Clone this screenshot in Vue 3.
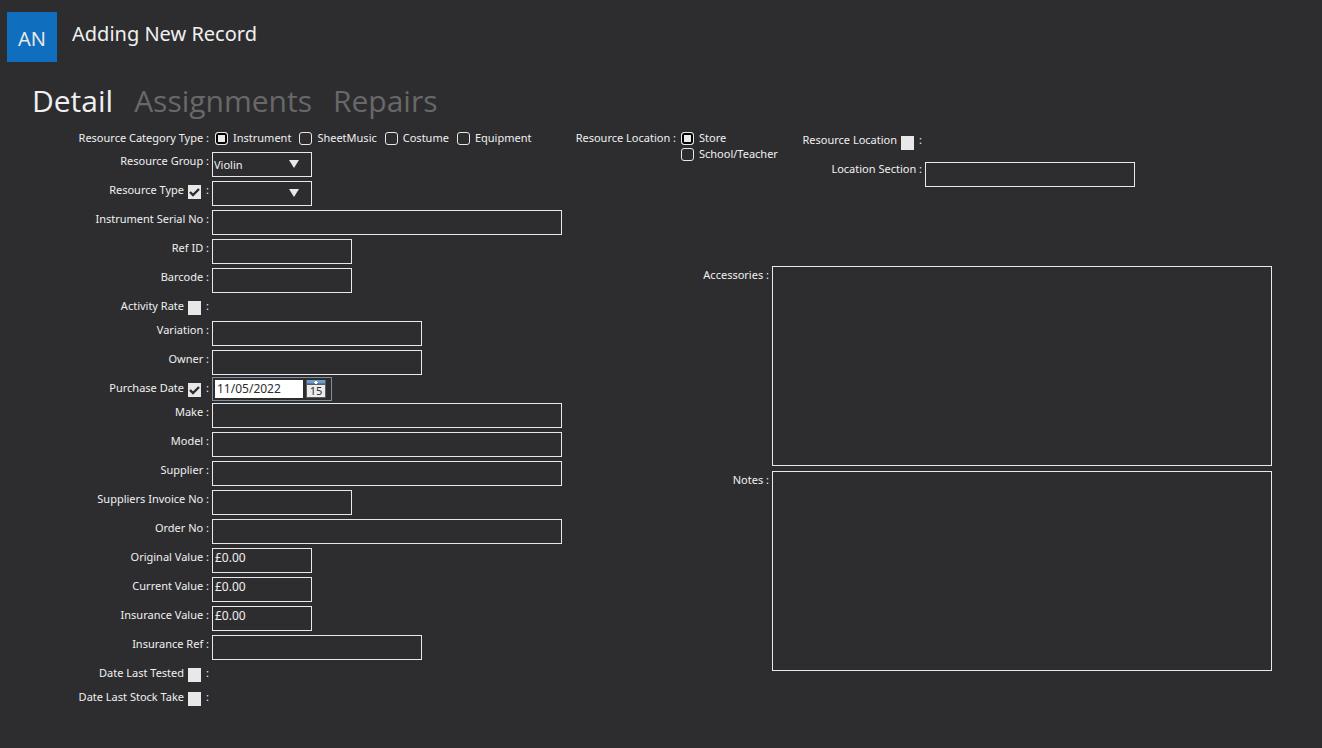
<template>
  <div class="page">
    <header class="header">
      <div class="avatar">AN</div>
      <h1 class="title">Adding New Record</h1>
    </header>

    <nav class="tabs">
      <button
        v-for="tab in tabs"
        :key="tab"
        type="button"
        class="tab"
        :class="{ active: tab === activeTab }"
        @click="activeTab = tab"
      >{{ tab }}</button>
    </nav>

    <form class="form" @submit.prevent>
      <div class="details">
        <div class="row category">
          <span id="category-label" class="caption">Resource Category Type :</span>
          <div class="radios" role="radiogroup" aria-labelledby="category-label">
            <label v-for="c in categories" :key="c" class="option">
              <input type="radio" name="category" :value="c" v-model="category" />{{ c }}
            </label>
          </div>
        </div>

        <div v-for="f in fields" :key="f.id" class="row" :class="{ short: f.type === 'none' || f.type === 'date' }">
          <div class="caption">
            <label :for="f.toggle ? f.id + '-on' : f.id">{{ f.label }}{{ f.toggle ? '' : ' :' }}</label>
            <template v-if="f.toggle">
              <input :id="f.id + '-on'" type="checkbox" v-model="f.on" />
              <span class="colon">:</span>
            </template>
          </div>
          <div v-if="f.type === 'select'" class="select small">
            <select :id="f.id" v-model="f.value" :aria-label="f.label">
              <option v-for="o in f.options" :key="o" :value="o">{{ o }}</option>
            </select>
            <svg class="arrow" viewBox="0 0 10 8"><path d="M0 0h10L5 8z" /></svg>
          </div>
          <div v-else-if="f.type === 'date'" class="date">
            <input :id="f.id" type="text" v-model="f.value" :aria-label="f.label" />
            <button type="button" class="calendar" aria-label="Open calendar">
              <svg viewBox="0 0 20 18">
                <rect width="20" height="18" fill="#5c5c5c" />
                <rect x="1" width="18" height="4" fill="#6f9cc8" />
                <rect x="1" y="3" width="18" height="1" fill="#4a7cab" />
                <path d="M9 1h2v1h1v1h-1v1H9V3H8V2h1z" fill="#fff" />
                <rect x="1" y="5" width="18" height="12" fill="#ececec" />
                <text x="10" y="15" text-anchor="middle" fill="#2d2d30">15</text>
              </svg>
            </button>
          </div>
          <input v-else-if="f.type === 'text'" :id="f.id" type="text" class="field" :class="f.size" v-model="f.value" />
        </div>
      </div>

      <div class="extra">
        <div class="location">
          <span id="location-label" class="location-label">Resource Location :</span>
          <div class="places" role="radiogroup" aria-labelledby="location-label">
            <label v-for="p in places" :key="p" class="option">
              <input type="radio" name="place" :value="p" v-model="place" />{{ p }}
            </label>
          </div>
          <div class="section">
            <div class="row">
              <div class="caption">
                <label for="resource-location">Resource Location</label>
                <input id="resource-location" type="checkbox" v-model="hasLocation" />
                <span class="colon">:</span>
              </div>
            </div>
            <div class="row">
              <label class="caption" for="location-section">Location Section :</label>
              <input id="location-section" type="text" class="field medium" v-model="locationSection" />
            </div>
          </div>
        </div>

        <div class="memo">
          <label class="caption" for="accessories">Accessories :</label>
          <textarea id="accessories" v-model="accessories"></textarea>
        </div>
        <div class="memo">
          <label class="caption" for="notes">Notes :</label>
          <textarea id="notes" v-model="notes"></textarea>
        </div>
      </div>
    </form>
  </div>
</template>

<script setup>
import { reactive, ref } from 'vue'

const tabs = ['Detail', 'Assignments', 'Repairs']
const activeTab = ref('Detail')

const categories = ['Instrument', 'SheetMusic', 'Costume', 'Equipment']
const category = ref('Instrument')

const places = ['Store', 'School/Teacher']
const place = ref('Store')

const hasLocation = ref(false)
const locationSection = ref('')
const accessories = ref('')
const notes = ref('')

const fields = reactive([
  { id: 'group', label: 'Resource Group', type: 'select', value: 'Violin', options: ['Violin'] },
  { id: 'type', label: 'Resource Type', type: 'select', value: '', options: [''], toggle: true, on: true },
  { id: 'serial', label: 'Instrument Serial No', type: 'text', size: 'large', value: '' },
  { id: 'ref', label: 'Ref ID', type: 'text', size: 'normal', value: '' },
  { id: 'barcode', label: 'Barcode', type: 'text', size: 'normal', value: '' },
  { id: 'rate', label: 'Activity Rate', type: 'none', toggle: true, on: false },
  { id: 'variation', label: 'Variation', type: 'text', size: 'medium', value: '' },
  { id: 'owner', label: 'Owner', type: 'text', size: 'medium', value: '' },
  { id: 'purchased', label: 'Purchase Date', type: 'date', value: '11/05/2022', toggle: true, on: true },
  { id: 'make', label: 'Make', type: 'text', size: 'large', value: '' },
  { id: 'model', label: 'Model', type: 'text', size: 'large', value: '' },
  { id: 'supplier', label: 'Supplier', type: 'text', size: 'large', value: '' },
  { id: 'invoice', label: 'Suppliers Invoice No', type: 'text', size: 'normal', value: '' },
  { id: 'order', label: 'Order No', type: 'text', size: 'large', value: '' },
  { id: 'original', label: 'Original Value', type: 'text', size: 'small', value: '£0.00' },
  { id: 'current', label: 'Current Value', type: 'text', size: 'small', value: '£0.00' },
  { id: 'insurance', label: 'Insurance Value', type: 'text', size: 'small', value: '£0.00' },
  { id: 'insurance-ref', label: 'Insurance Ref', type: 'text', size: 'medium', value: '' },
  { id: 'tested', label: 'Date Last Tested', type: 'none', toggle: true, on: false },
  { id: 'stock', label: 'Date Last Stock Take', type: 'none', toggle: true, on: false }
])
</script>

<style>
body {
  margin: 0;
  background: #2d2d30;
}
</style>

<style scoped>
.page {
  box-sizing: border-box;
  min-height: 100vh;
  padding: 12px 50px 40px 0;
  color: #f0f0f0;
  font: 11px/18px "Noto Sans", sans-serif;
}

input,
select,
textarea,
button {
  box-sizing: border-box;
  margin: 0;
  color: inherit;
  font: inherit;
}

.header {
  display: flex;
  gap: 15px;
  height: 50px;
  padding-left: 7px;
}

.avatar {
  width: 50px;
  height: 50px;
  background: #106ebe;
  color: #e8e8e8;
  font-size: 20px;
  line-height: 54px;
  text-align: center;
}

.title {
  margin: 0;
  font-size: 20px;
  font-weight: 400;
  line-height: 44px;
}

.tabs {
  display: flex;
  gap: 21px;
  margin-top: 19px;
  padding-left: 32px;
}

.tab {
  padding: 0;
  border: 0;
  background: none;
  color: #686868;
  font-family: "Open Sans", "Noto Sans", sans-serif;
  font-size: 30px;
  line-height: 40px;
}

.tab.active {
  color: #f0f0f0;
}

.form {
  display: grid;
  grid-template-columns: 562px 1fr;
  gap: 11px;
  margin-top: 8px;
}

.details {
  display: flex;
  flex-direction: column;
  gap: 4px;
}

.row {
  display: flex;
  gap: 3px;
  height: 25px;
}

.row.short {
  height: 20px;
}

.row.category {
  height: 19px;
}

.caption {
  display: flex;
  flex: none;
  justify-content: flex-end;
  width: 209px;
  white-space: nowrap;
}

input[type='checkbox'] {
  flex: none;
  width: 13px;
  height: 14px;
  margin: 4px 5px 0 4px;
  appearance: none;
  background: #e8e8e8;
}

input[type='checkbox']:checked {
  background: #e8e8e8 url("data:image/svg+xml,%3Csvg xmlns='http://www.w3.org/2000/svg' viewBox='0 0 13 14'%3E%3Cpath d='M2 7l3 3 6-6' fill='none' stroke='%232d2d30' stroke-width='2.4'/%3E%3C/svg%3E");
}

.radios {
  display: flex;
  gap: 8px;
  padding-left: 3px;
}

.option {
  display: flex;
  gap: 5px;
  white-space: nowrap;
}

input[type='radio'] {
  flex: none;
  width: 13px;
  height: 13px;
  margin-top: 3px;
  appearance: none;
  border: 1px solid #e8e8e8;
  border-radius: 3px;
}

input[type='radio']:checked {
  background: #e8e8e8;
  box-shadow: inset 0 0 0 2px #000;
}

.field,
.select {
  height: 25px;
  border: 1px solid #e8e8e8;
  background: none;
}

.field {
  padding: 0 2px 6px;
  font-size: 12px;
}

.small {
  width: 100px;
}

.normal {
  width: 140px;
}

.medium {
  width: 210px;
}

.large {
  width: 350px;
}

.select {
  box-sizing: border-box;
  position: relative;
}

.select select {
  width: 100%;
  height: 23px;
  padding: 0 1px;
  border: 0;
  appearance: none;
  background: #2d2d30;
}

.arrow {
  position: absolute;
  top: 7px;
  right: 12px;
  width: 10px;
  height: 8px;
  fill: #e8e8e8;
  pointer-events: none;
}

.date {
  box-sizing: border-box;
  display: flex;
  align-self: flex-start;
  gap: 3px;
  width: 120px;
  height: 24px;
  margin-top: -2px;
  padding: 2px;
  border: 1px solid #7f909c;
}

.date input {
  width: 88px;
  height: 18px;
  padding: 0 2px;
  border: 0;
  background: #fff;
  color: #2d2d30;
  font-size: 12px;
}

.calendar {
  width: 20px;
  height: 18px;
  padding: 0;
  border: 0;
  background: none;
}

.calendar svg {
  display: block;
  font-size: 11px;
}

.extra {
  display: flex;
  flex-direction: column;
  gap: 5px;
}

.location {
  display: flex;
  gap: 5px;
  height: 132px;
}

.location-label {
  width: 103px;
  text-align: right;
  white-space: nowrap;
}

.places {
  display: flex;
  flex-direction: column;
  width: 100px;
}

.places .option {
  height: 16px;
}

.section {
  display: flex;
  flex-direction: column;
  gap: 4px;
  padding: 4px 0 0 14px;
  line-height: 14px;
}

.section .caption {
  width: 122px;
}

.section input[type='checkbox'] {
  margin-top: 3px;
}

.memo {
  display: flex;
  gap: 3px;
}

.memo .caption {
  width: 196px;
}

textarea {
  flex: 1;
  min-width: 0;
  height: 200px;
  padding: 2px;
  border: 1px solid #e8e8e8;
  background: none;
  resize: none;
}
</style>
